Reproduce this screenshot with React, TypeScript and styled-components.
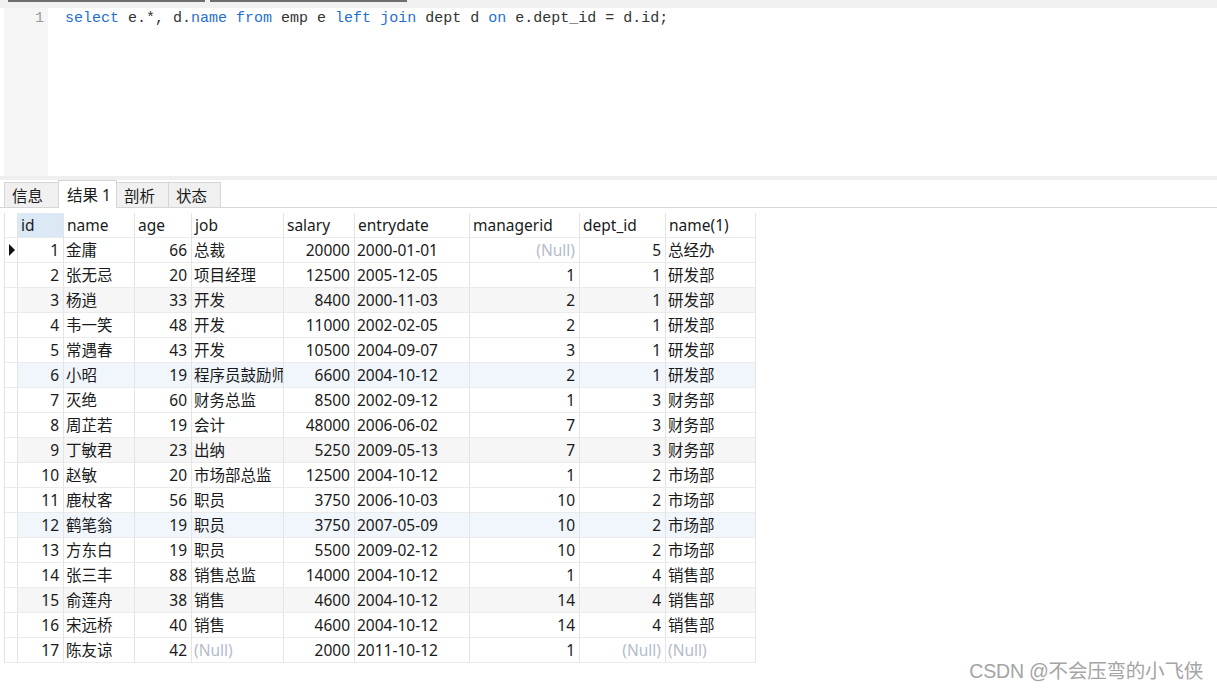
import * as React from "react";
import styled, {createGlobalStyle} from "styled-components";

const GlobalStyle = createGlobalStyle`
  html, body {
    margin: 0;
    padding: 0;
    background: #ffffff;
  }
  body {
    font-family: "Noto Sans", "Noto Sans CJK SC", sans-serif;
    color: #1a1a1a;
  }
`;

const Page = styled.div`
  width: 1217px;
  height: 690px;
  display: flex;
  flex-direction: column;
  position: relative;
  overflow: hidden;
  background: #ffffff;
`;

const TopStrip = styled.div`
  height: 8px;
  background: #f0f0f0;
  display: flex;
  gap: 5px;
  padding-left: 8px;
  align-items: flex-start;
`;

const StripEdge = styled.div<{w: number}>`
  width: ${({w}) => w}px;
  height: 2px;
  background: #6e6e6e;
`;

const Editor = styled.div`
  height: 168px;
  display: flex;
  padding-left: 4px;
`;

const Gutter = styled.div`
  width: 44px;
  background: #f5f5f5;
  box-sizing: border-box;
  padding: 1px 4px 0 0;
  text-align: right;
  font-family: "Liberation Mono", monospace;
  font-size: 15px;
  line-height: 20px;
  color: #9a9a9a;
`;

const Code = styled.div`
  flex: 1;
  padding: 1px 0 0 17px;
  font-family: "Liberation Mono", monospace;
  font-size: 15px;
  line-height: 20px;
  color: #333333;
  white-space: pre;
`;

const Kw = styled.span`
  color: #1f6fcf;
`;

const Separator = styled.div`
  height: 4px;
  background: #efefef;
`;

const TabBar = styled.div`
  height: 28px;
  display: flex;
  align-items: flex-end;
  padding-left: 4px;
  box-sizing: border-box;
  border-bottom: 1px solid #d6d6d6;
`;

const Tab = styled.div<{active?: boolean; w: number}>`
  width: ${({w}) => w}px;
  height: ${({active}) => (active ? 28 : 25)}px;
  box-sizing: border-box;
  display: flex;
  align-items: center;
  padding-left: ${({active}) => (active ? 8 : 7)}px;
  padding-top: ${({active}) => (active ? 0 : 1)}px;
  background: ${({active}) => (active ? "#ffffff" : "#f0f0f0")};
  border: 1px solid #d6d6d6;
  border-bottom: none;
  margin-bottom: ${({active}) => (active ? -1 : 0)}px;
  margin-left: -1px;
  font-family: "Noto Sans", "Noto Sans CJK SC", sans-serif;
  font-size: 15.5px;
  color: #1a1a1a;
`;

const GridArea = styled.div`
  padding: 5px 0 0 4px;
`;

const COLS = [13, 46, 71, 57, 92, 71, 115, 110, 86, 90];

const Grid = styled.div`
  display: grid;
  grid-template-columns: ${COLS.map(c => `${c}px`).join(" ")};
  grid-auto-rows: 25px;
  width: max-content;
  border-left: 1px solid #e2e2e2;
`;

type Shade = "none" | "gray" | "blue";

const Cell = styled.div<{right?: boolean; shade?: Shade; head?: boolean; hl?: boolean; muted?: boolean}>`
  box-sizing: border-box;
  border-right: 1px solid #e4e4e4;
  border-bottom: 1px solid #ebebeb;
  display: flex;
  align-items: center;
  justify-content: ${({right}) => (right ? "flex-end" : "flex-start")};
  padding: ${({right}) => (right ? "2px 4px 0 0" : "2px 0 0 2px")};
  background: ${({shade, hl}) =>
    hl ? "#dbe8f6" : shade === "gray" ? "#f6f6f6" : shade === "blue" ? "#f1f6fc" : "#ffffff"};
  font-size: 15.5px;
  line-height: 1;
  white-space: nowrap;
  overflow: hidden;
  color: ${({muted}) => (muted ? "#b3bccb" : "#1a1a1a")};
  padding-left: ${({head}) => (head ? "3px" : undefined)};
`;

const Indicator = styled.div`
  box-sizing: border-box;
  border-right: 1px solid #e4e4e4;
  border-bottom: 1px solid #ebebeb;
  display: flex;
  align-items: center;
  padding-left: 4px;
  background: #ffffff;
`;

const Arrow = styled.div`
  width: 0;
  height: 0;
  border-top: 6px solid transparent;
  border-bottom: 6px solid transparent;
  border-left: 6px solid #111111;
`;

const Watermark = styled.div`
  position: absolute;
  right: 14px;
  bottom: 6px;
  font-family: "Liberation Sans", "Noto Sans CJK SC", sans-serif;
  font-size: 19.5px;
  color: #a4a4a4;
  letter-spacing: -0.2px;
  text-shadow: 0 0 2px #ffffff;
`;

const headers = ["id", "name", "age", "job", "salary", "entrydate", "managerid", "dept_id", "name(1)"];
const rightAligned = [true, false, true, false, true, false, true, true, false];

const NULL = null;
type V = string | number | null;

const rows: V[][] = [
  [1, "金庸", 66, "总裁", 20000, "2000-01-01", NULL, 5, "总经办"],
  [2, "张无忌", 20, "项目经理", 12500, "2005-12-05", 1, 1, "研发部"],
  [3, "杨逍", 33, "开发", 8400, "2000-11-03", 2, 1, "研发部"],
  [4, "韦一笑", 48, "开发", 11000, "2002-02-05", 2, 1, "研发部"],
  [5, "常遇春", 43, "开发", 10500, "2004-09-07", 3, 1, "研发部"],
  [6, "小昭", 19, "程序员鼓励师", 6600, "2004-10-12", 2, 1, "研发部"],
  [7, "灭绝", 60, "财务总监", 8500, "2002-09-12", 1, 3, "财务部"],
  [8, "周芷若", 19, "会计", 48000, "2006-06-02", 7, 3, "财务部"],
  [9, "丁敏君", 23, "出纳", 5250, "2009-05-13", 7, 3, "财务部"],
  [10, "赵敏", 20, "市场部总监", 12500, "2004-10-12", 1, 2, "市场部"],
  [11, "鹿杖客", 56, "职员", 3750, "2006-10-03", 10, 2, "市场部"],
  [12, "鹤笔翁", 19, "职员", 3750, "2007-05-09", 10, 2, "市场部"],
  [13, "方东白", 19, "职员", 5500, "2009-02-12", 10, 2, "市场部"],
  [14, "张三丰", 88, "销售总监", 14000, "2004-10-12", 1, 4, "销售部"],
  [15, "俞莲舟", 38, "销售", 4600, "2004-10-12", 14, 4, "销售部"],
  [16, "宋远桥", 40, "销售", 4600, "2004-10-12", 14, 4, "销售部"],
  [17, "陈友谅", 42, NULL, 2000, "2011-10-12", 1, NULL, NULL],
];

const shadeFor = (n: number): Shade => (n % 6 === 0 ? "blue" : n % 3 === 0 ? "gray" : "none");

export default function App() {
  return (
    <Page>
      <GlobalStyle />
      <TopStrip>
        <StripEdge w={197} />
        <StripEdge w={197} />
      </TopStrip>
      <Editor>
        <Gutter>1</Gutter>
        <Code>
          <Kw>select</Kw> e.*, d.<Kw>name</Kw> <Kw>from</Kw> emp e <Kw>left</Kw> <Kw>join</Kw> dept d{" "}
          <Kw>on</Kw> e.dept_id = d.id;
        </Code>
      </Editor>
      <Separator />
      <TabBar>
        <Tab w={55} style={{marginLeft: 0}}>信息</Tab>
        <Tab w={59} active>结果 1</Tab>
        <Tab w={53}>剖析</Tab>
        <Tab w={53}>状态</Tab>
      </TabBar>
      <GridArea>
        <Grid>
          <Indicator />
          {headers.map((h, i) => (
            <Cell key={h} head hl={i === 0}>
              {h}
            </Cell>
          ))}
          {rows.map((r, ri) => {
            const shade = shadeFor(ri + 1);
            return (
              <React.Fragment key={ri}>
                <Indicator>{ri === 0 && <Arrow />}</Indicator>
                {r.map((v, ci) => (
                  <Cell key={ci} right={rightAligned[ci]} shade={shade} muted={v === null}>
                    {v === null ? "(Null)" : v}
                  </Cell>
                ))}
              </React.Fragment>
            );
          })}
        </Grid>
      </GridArea>
      <Watermark>CSDN @不会压弯的小飞侠</Watermark>
    </Page>
  );
}
